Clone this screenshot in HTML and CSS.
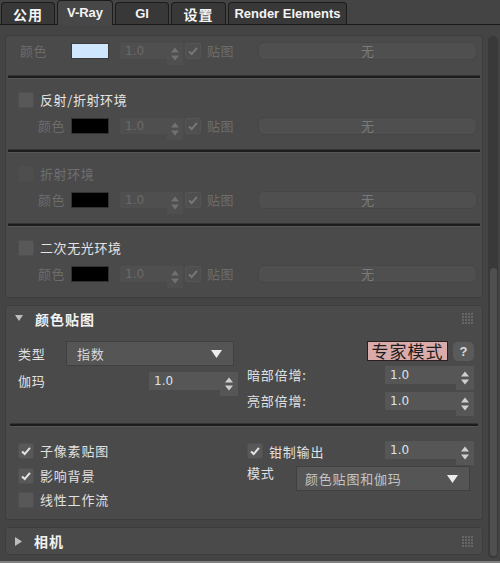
FILE: index.html
```html
<!DOCTYPE html>
<html>
<head>
<meta charset="utf-8">
<link rel="stylesheet" href="styles.css">
</head>
<body>
<div class="tabbar">
  <div class="tab t1">公用</div>
  <div class="tab t2 active latin">V-Ray</div>
  <div class="tab t3 latin">GI</div>
  <div class="tab t4">设置</div>
  <div class="tab t5 latin">Render Elements</div>
</div>
<div class="content">
  <div class="main">
    <section class="rollout r1">
      <div class="vrow first">
        <span class="clabel dis">颜色</span>
        <span class="swatch blue"></span>
        <span class="spin small dis"><span class="f">1.0</span><span class="a"><svg width="8" height="14" viewBox="0 0 8 14"><path d="M0 5.5 4 0.5 8 5.5Z M0 8.5 8 8.5 4 13.5Z"/></svg></span></span>
        <span class="cb dis"><svg width="16" height="16" viewBox="0 0 16 16"><path d="M3.5 8.5 6.5 11.5 12.5 4.5" fill="none" stroke-width="2.4"/></svg></span>
        <span class="maplbl dis">贴图</span>
        <span class="nonebtn">无</span>
      </div>
      <div class="sep"></div>
      <div class="group">
        <div class="crow"><span class="cb box"></span><span class="ctitle">反射/折射环境</span></div>
        <div class="vrow">
          <span class="clabel dis ind">颜色</span>
          <span class="swatch black"></span>
          <span class="spin small dis"><span class="f">1.0</span><span class="a"><svg width="8" height="14" viewBox="0 0 8 14"><path d="M0 5.5 4 0.5 8 5.5Z M0 8.5 8 8.5 4 13.5Z"/></svg></span></span>
          <span class="cb dis"><svg width="16" height="16" viewBox="0 0 16 16"><path d="M3.5 8.5 6.5 11.5 12.5 4.5" fill="none" stroke-width="2.4"/></svg></span>
          <span class="maplbl dis">贴图</span>
          <span class="nonebtn">无</span>
        </div>
      </div>
      <div class="sep"></div>
      <div class="group">
        <div class="crow"><span class="cb box off"></span><span class="ctitle dis">折射环境</span></div>
        <div class="vrow">
          <span class="clabel dis ind">颜色</span>
          <span class="swatch black"></span>
          <span class="spin small dis"><span class="f">1.0</span><span class="a"><svg width="8" height="14" viewBox="0 0 8 14"><path d="M0 5.5 4 0.5 8 5.5Z M0 8.5 8 8.5 4 13.5Z"/></svg></span></span>
          <span class="cb dis"><svg width="16" height="16" viewBox="0 0 16 16"><path d="M3.5 8.5 6.5 11.5 12.5 4.5" fill="none" stroke-width="2.4"/></svg></span>
          <span class="maplbl dis">贴图</span>
          <span class="nonebtn">无</span>
        </div>
      </div>
      <div class="sep"></div>
      <div class="group">
        <div class="crow"><span class="cb box"></span><span class="ctitle">二次无光环境</span></div>
        <div class="vrow">
          <span class="clabel dis ind">颜色</span>
          <span class="swatch black"></span>
          <span class="spin small dis"><span class="f">1.0</span><span class="a"><svg width="8" height="14" viewBox="0 0 8 14"><path d="M0 5.5 4 0.5 8 5.5Z M0 8.5 8 8.5 4 13.5Z"/></svg></span></span>
          <span class="cb dis"><svg width="16" height="16" viewBox="0 0 16 16"><path d="M3.5 8.5 6.5 11.5 12.5 4.5" fill="none" stroke-width="2.4"/></svg></span>
          <span class="maplbl dis">贴图</span>
          <span class="nonebtn">无</span>
        </div>
      </div>
    </section>

    <section class="rollout r2">
      <div class="rhead">
        <svg class="tri" width="8" height="7" viewBox="0 0 8 7"><path d="M0 0 8 0 4 6Z"/></svg>
        <span class="rtitle">颜色贴图</span>
        <svg class="grip" width="11" height="11" viewBox="0 0 11 11"><path d="M0 0h2v2H0zM3 0h2v2H3zM6 0h2v2H6zM9 0h2v2H9zM0 3h2v2H0zM3 3h2v2H3zM6 3h2v2H6zM9 3h2v2H9zM0 6h2v2H0zM3 6h2v2H3zM6 6h2v2H6zM9 6h2v2H9zM0 9h2v2H0zM3 9h2v2H3zM6 9h2v2H6zM9 9h2v2H9z"/></svg>
      </div>
      <div class="rbody">
        <div class="upper">
          <div class="col">
            <div class="lrow1">
              <span class="lbl typ">类型</span>
              <span class="dd dd1"><span>指数</span><svg width="11" height="8" viewBox="0 0 11 8"><path d="M0 0 11 0 5.5 8Z"/></svg></span>
            </div>
            <div class="lrow2">
              <span class="lbl">伽玛</span>
              <span class="spin big"><span class="f">1.0</span><span class="a"><svg width="8" height="14" viewBox="0 0 8 14"><path d="M0 5.5 4 0.5 8 5.5Z M0 8.5 8 8.5 4 13.5Z"/></svg></span></span>
            </div>
          </div>
          <div class="col">
            <div class="rrow1">
              <span class="expert">专家模式</span>
              <span class="help">?</span>
            </div>
            <div class="rrow2 firstr">
              <span class="lbl">暗部倍增:</span>
              <span class="spin big"><span class="f">1.0</span><span class="a"><svg width="8" height="14" viewBox="0 0 8 14"><path d="M0 5.5 4 0.5 8 5.5Z M0 8.5 8 8.5 4 13.5Z"/></svg></span></span>
            </div>
            <div class="rrow2">
              <span class="lbl">亮部倍增:</span>
              <span class="spin big"><span class="f">1.0</span><span class="a"><svg width="8" height="14" viewBox="0 0 8 14"><path d="M0 5.5 4 0.5 8 5.5Z M0 8.5 8 8.5 4 13.5Z"/></svg></span></span>
            </div>
          </div>
        </div>
        <div class="sep sep2"></div>
        <div class="lower">
          <div class="col checks">
            <div class="crow2"><span class="cb box"><svg width="16" height="16" viewBox="0 0 16 16"><path d="M3.5 8.5 6.5 11.5 12.5 4.5" fill="none" stroke-width="2.4"/></svg></span><span class="lbl">子像素贴图</span></div>
            <div class="crow2"><span class="cb box"><svg width="16" height="16" viewBox="0 0 16 16"><path d="M3.5 8.5 6.5 11.5 12.5 4.5" fill="none" stroke-width="2.4"/></svg></span><span class="lbl">影响背景</span></div>
            <div class="crow2"><span class="cb box"></span><span class="lbl">线性工作流</span></div>
          </div>
          <div class="col">
            <div class="clamp">
              <span class="cb box"><svg width="16" height="16" viewBox="0 0 16 16"><path d="M3.5 8.5 6.5 11.5 12.5 4.5" fill="none" stroke-width="2.4"/></svg></span>
              <span class="lbl">钳制输出</span>
              <span class="spin big"><span class="f">1.0</span><span class="a"><svg width="8" height="14" viewBox="0 0 8 14"><path d="M0 5.5 4 0.5 8 5.5Z M0 8.5 8 8.5 4 13.5Z"/></svg></span></span>
            </div>
            <div class="moderow">
              <span class="lbl mode">模式</span>
              <span class="dd dd2"><span>颜色贴图和伽玛</span><svg width="11" height="8" viewBox="0 0 11 8"><path d="M0 0 11 0 5.5 8Z"/></svg></span>
            </div>
          </div>
        </div>
      </div>
    </section>

    <section class="rollout r3">
      <div class="rhead h3">
        <svg class="tri" width="7" height="9" viewBox="0 0 7 9"><path d="M0 0 7 4.5 0 9Z"/></svg>
        <span class="rtitle">相机</span>
        <svg class="grip" width="11" height="11" viewBox="0 0 11 11"><path d="M0 0h2v2H0zM3 0h2v2H3zM6 0h2v2H6zM9 0h2v2H9zM0 3h2v2H0zM3 3h2v2H3zM6 3h2v2H6zM9 3h2v2H9zM0 6h2v2H0zM3 6h2v2H3zM6 6h2v2H6zM9 6h2v2H9zM0 9h2v2H0zM3 9h2v2H3zM6 9h2v2H6zM9 9h2v2H9z"/></svg>
      </div>
    </section>
  </div>
  <div class="scroll">
    <div class="track"><div class="thumb"></div></div>
  </div>
</div>
<div class="bottomline"></div>
</body>
</html>
```

FILE: styles.css
```css
* { box-sizing: border-box; margin: 0; padding: 0; }
html, body { width: 500px; height: 563px; overflow: hidden; }
body {
  background: #444444;
  font-family: "Noto Sans CJK SC", "Liberation Sans", sans-serif;
  font-size: 13px;
  color: #dedede;
}

/* tabs */
.tabbar {
  height: 25px;
  display: flex;
  align-items: flex-end;
  gap: 2px;
  padding-left: 1px;
  border-bottom: 1px solid #1a1a1a;
  background: #444444;
}
.tab {
  height: 22px;
  background: #383838;
  border: 1px solid #1c1c1c;
  border-bottom: none;
  border-radius: 4px 4px 0 0;
  display: flex;
  align-items: center;
  justify-content: center;
  color: #f4f4f4;
  font-weight: 700;
  font-size: 14px;
  letter-spacing: 1px;
  line-height: 1;
}
.tab.latin { font-family: "Liberation Sans", sans-serif; font-size: 13px; letter-spacing: 0; }
.t1 { width: 54px; }
.t2 { width: 56px; }
.t3 { width: 54px; }
.t4 { width: 55px; }
.t5 { width: 119px; }
.tab.active {
  height: 25px;
  margin-bottom: -1px;
  background: #474747;
  padding-bottom: 2px;
}

/* layout */
.content { display: flex; height: 536px; }
.main { width: 487px; padding: 10px 4px 0 5px; overflow: hidden; display: flex; flex-direction: column; gap: 7px; }
.scroll { width: 13px; padding: 11px 2px 3px 1px; display: flex; }
.track { flex: 1; background: #393939; border-radius: 5px; display: flex; flex-direction: column; padding: 232px 1px 2px 2px; }
.thumb { flex: 1; background: #4f4f4f; border-radius: 4px; }
.bottomline { height: 2px; background: #808080; }

.rollout {
  background: #4a4a4a;
  border: 1px solid #3d3d3d;
  border-radius: 3px;
  flex: none;
}

/* separators */
.sep {
  height: 4px;
  margin: 0 2px;
  background: #1c1c1c;
  border-top: 1px solid #353535;
  border-bottom: 1px solid #565656;
}

/* rollout 1 */
.r1 { padding-top: 5px; }
.vrow { display: flex; align-items: center; height: 20px; padding-left: 14px; }
.first { margin-bottom: 14px; }
.group { padding: 11px 0 13px; }
.group .vrow { margin-top: 6px; }
.crow { display: flex; align-items: center; height: 20px; padding-left: 12px; gap: 6px; }
.ctitle { line-height: 18px; letter-spacing: 0.6px; color: #e4e4e4; }
.ctitle.dis { color: #6e6e6e; }
.clabel { width: 51px; flex: none; line-height: 18px; letter-spacing: 0.6px; }
.clabel.ind { padding-left: 18px; }
.dis { color: #6c6c6c; }

.swatch { width: 38px; height: 16px; flex: none; border: 1px solid #2e2e2e; margin-right: 11px; }
.swatch.blue { background: #cfe6ff; border-color: #3a3a3a; }
.swatch.black { background: #000000; border-color: #333333; }

.cb {
  width: 16px; height: 16px;
  border-radius: 2px;
  display: flex; align-items: center; justify-content: center;
  flex: none;
}
.cb svg { stroke: #e2e2e2; }
.cb.dis { background: #4f4f4f; border: 1px solid #555555; margin-left: 2px; }
.cb.dis svg { stroke: #777777; }
.cb.box { background: #585858; border: 1px solid #505050; }
.cb.box.off { background: #4e4e4e; border-color: #4c4c4c; }
.maplbl { width: 57px; flex: none; padding-left: 6px; line-height: 18px; letter-spacing: 0.6px; }

.nonebtn {
  width: 219px; height: 18px;
  flex: none;
  background: #4f4f4f;
  border: 1px solid #464646;
  border-radius: 6px;
  color: #7a7a7a;
  font-size: 13px;
  line-height: 16px;
  text-align: center;
}

/* spinner */
.spin { display: flex; align-items: flex-start; flex: none; align-self: flex-start; }
.spin .f {
  background: #565656;
  height: 18px;
  font-family: "DejaVu Sans", sans-serif;
  font-size: 12px;
  line-height: 18px;
  padding-left: 5px;
  color: #dbe3ee;
}
.spin .a {
  background: #565656;
  height: 24px;
  display: flex; align-items: center; justify-content: center;
  fill: #d0d0d0;
}
.spin.big .f { width: 71px; }
.spin.big .a { width: 18px; }
.spin.big { margin-left: auto; }
.spin.small { margin-top: 2px; }
.spin.small .f { width: 47px; height: 16px; line-height: 16px; background: #4f4f4f; color: #6a6a6a; }
.spin.small .a { width: 16px; height: 22px; background: #4f4f4f; fill: #717171; }

/* rollout headers */
.rhead { height: 25px; display: flex; align-items: center; padding: 0 9px 0 9px; }
.h3 { height: 26px; }
.tri { fill: #bdbdbd; flex: none; }
.rtitle { margin-left: 12px; font-weight: 700; font-size: 14px; letter-spacing: 1px; color: #f2f2f2; line-height: 18px; }
.grip { margin-left: auto; fill: #666666; }

/* rollout 2 body */
.rbody { padding: 10px 2px 9px; }
.upper, .lower {
  display: grid;
  grid-template-columns: 220px 227px;
  column-gap: 9px;
  padding-left: 10px;
}
.lower { padding-top: 14px; }
.sep2 { margin-top: 5px; }
.col { display: flex; flex-direction: column; }
.lbl { line-height: 18px; letter-spacing: 0.8px; color: #e0e0e0; }
.typ { width: 48px; flex: none; }

.lrow1 { display: flex; align-items: center; height: 25px; }
.lrow2 { display: flex; align-items: flex-start; height: 24px; margin-top: 6px; }

.dd {
  height: 25px;
  background: #555555;
  border: 1px solid #404040;
  display: flex; align-items: center;
  padding: 0 11px 0 10px;
  color: #d8d8d8;
  letter-spacing: 0.8px;
}
.dd svg { margin-left: auto; fill: #ececec; flex: none; }
.dd1 { width: 168px; }
.dd2 { width: 174px; color: #c4c4c4; padding-left: 8px; }

.rrow1 { display: flex; justify-content: flex-end; align-items: center; height: 20px; gap: 5px; }
.expert {
  width: 81px; height: 20px;
  background: #d9abab;
  border: 1px solid #2a2020;
  color: #1e1e1e;
  font-size: 17px;
  line-height: 18px;
  letter-spacing: 1px;
  text-align: center;
  white-space: nowrap;
}
.help {
  width: 21px; height: 19px;
  background: #5a5a5a;
  border-radius: 5px;
  color: #dcdcdc;
  font-family: "Liberation Sans", sans-serif;
  font-weight: 700;
  font-size: 13px;
  line-height: 19px;
  text-align: center;
}
.rrow2 { display: flex; align-items: flex-start; height: 26px; }
.rrow2.firstr { margin-top: 5px; }

.checks { gap: 4.5px; }
.crow2 { display: flex; align-items: center; height: 20px; gap: 6px; }
.clamp { display: flex; align-items: flex-start; height: 24px; gap: 6px; }
.clamp .cb { margin-top: 2px; }
.clamp .lbl { margin-top: 2px; }
.moderow { display: flex; align-items: flex-start; margin-top: 1px; }
.mode { width: 49px; line-height: 14px; flex: none; }
```
